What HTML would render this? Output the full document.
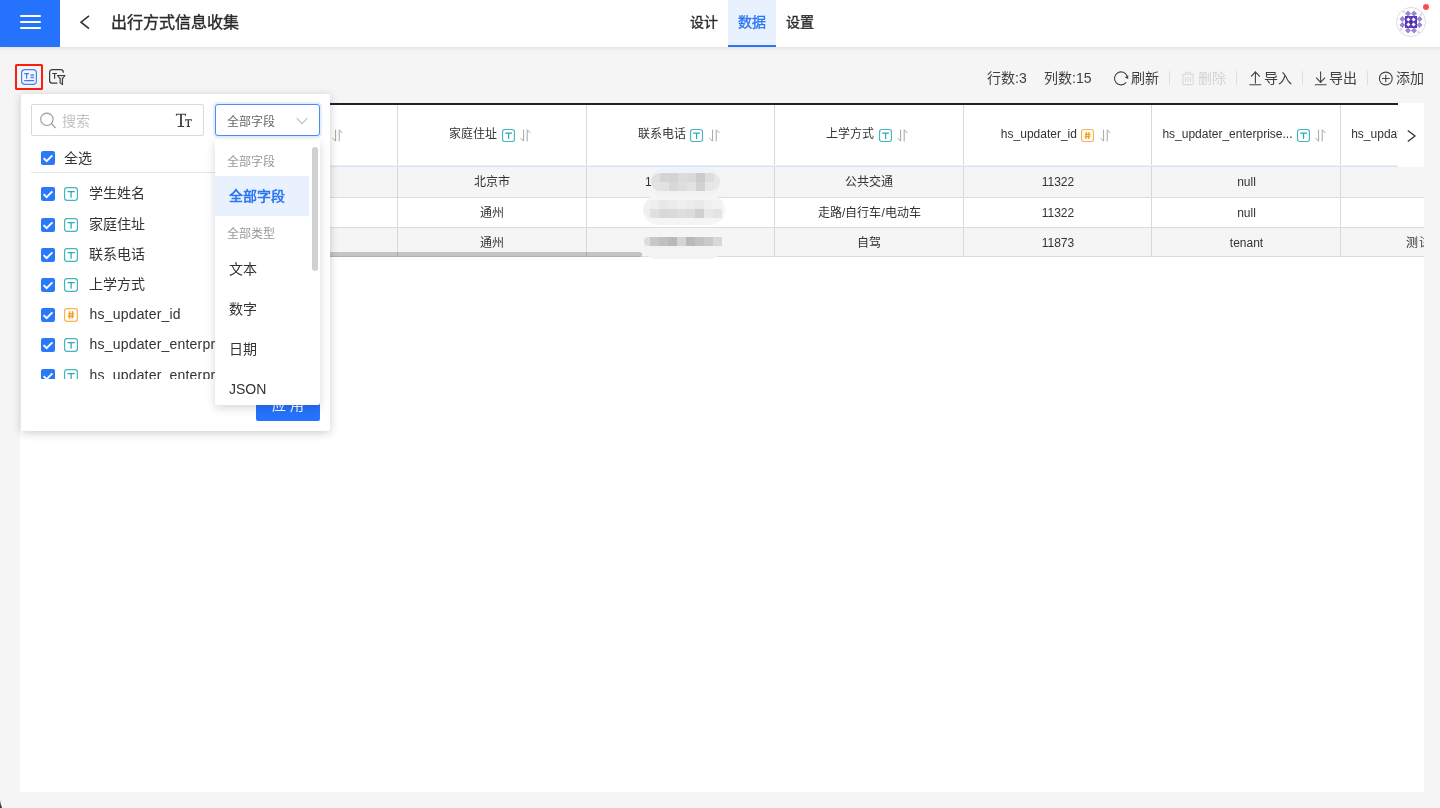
<!DOCTYPE html>
<html lang="zh-CN">
<head>
<meta charset="utf-8">
<title>出行方式信息收集</title>
<style>
*{box-sizing:border-box;margin:0;padding:0}
html,body{width:1440px;height:808px;overflow:hidden;background:#f5f5f5;font-family:"Liberation Sans",sans-serif;color:#333;font-size:14px}
#root{position:absolute;left:0;top:0;width:1440px;height:808px;overflow:hidden;will-change:transform}
.abs{position:absolute}
svg{display:block;overflow:visible}
/* header */
#hdr{position:absolute;left:0;top:0;width:1440px;height:47px;background:#fff;box-shadow:0 1px 4px rgba(0,0,0,.10)}
#menu{position:absolute;left:0;top:0;width:60px;height:47px;background:#2573fd}
#menu i{position:absolute;left:20px;width:21px;height:2px;background:#fff;border-radius:1px}
#title{position:absolute;left:111px;top:11px;height:24px;line-height:24px;font-size:16px;font-weight:normal;-webkit-text-stroke:.4px #2b2b2b;color:#2b2b2b;white-space:nowrap;letter-spacing:0}
.tab{position:absolute;top:0;width:48px;height:47px;line-height:45px;text-align:center;font-size:14px;font-weight:normal;-webkit-text-stroke:.35px;color:#2b2b2b}
.tab.on{background:#e9f1fe;color:#2a77f6;border-bottom:2px solid #2a77f6}
#avatar{position:absolute;left:1396px;top:7px;width:30px;height:30px;border-radius:50%;border:1px solid #dcdcdc;background:#fff;overflow:hidden}
#dot{position:absolute;left:1423px;top:4px;width:6px;height:6px;border-radius:50%;background:#ff4d4f}
/* toolbar */
#redbox{position:absolute;left:15px;top:64px;width:28px;height:26px;border:2px solid #ff1d12;border-radius:1.5px}
.tb{position:absolute;top:68px;height:20px;line-height:20px;font-size:14px;color:#404040;white-space:nowrap}
.tb.dis{color:#d4d4d4}
.vdiv{position:absolute;top:71px;width:1px;height:14px;background:#dedede}
/* panel + table */
#panel{position:absolute;left:20px;top:103px;width:1404px;height:689px;background:#fff}
#ttop{position:absolute;left:21px;top:103px;width:1377px;height:2px;background:#1f2329}
#thead{position:absolute;left:20px;top:105px;width:1378px;height:61px;background:#fff;overflow:hidden}
#hline{position:absolute;left:20px;top:165px;width:1378px;height:2px;background:linear-gradient(#e9f0fe 0 50%,#d2e1fc 50% 100%)}
.row{position:absolute;left:20px;width:1404px;height:30px;overflow:hidden;border-bottom:1px solid #dcdcdc}
.row.g{background:#f5f5f5}
.cb{position:absolute;top:0;width:1px;background:#d8d8d8}
.hc{position:absolute;top:0;height:61px;line-height:16px;display:flex;align-items:center;justify-content:center;font-size:12px;color:#333;white-space:nowrap;padding:0 11.5px 0 9.5px;overflow:hidden}
.hc .tx{position:relative;top:-2px}
.hc .ti{margin-left:4.5px;flex:none}
.hc .so{margin-left:5.5px;flex:none}
.c{position:absolute;top:0;height:30px;line-height:31px;padding-left:2.2px;text-align:center;font-size:12px;color:#333;white-space:nowrap}
.ti{display:inline-block;width:13px;height:13px}
#more{position:absolute;left:1398px;top:103px;width:26px;height:64px;background:#fff}
#mos i,#mos b{position:absolute;display:block}
.digit1{position:absolute;left:645px;top:167px;line-height:31px;font-size:12px;color:#333}
/* popup */
#pop{position:absolute;left:21px;top:94px;width:309px;height:337px;background:#fff;border-radius:2px;box-shadow:0 2px 10px rgba(0,0,0,.2)}
#search{position:absolute;left:10px;top:10px;width:173px;height:32px;border:1px solid #d9d9d9;border-radius:2px;background:#fff}
#search .ph{position:absolute;left:30px;top:5.5px;line-height:20px;font-size:14px;color:#c2c2c2}
#sel{position:absolute;left:194px;top:10px;width:105px;height:32px;border:1px solid #4a8df8;border-radius:3px;background:#fff;box-shadow:0 0 0 2px rgba(42,119,246,.12)}
#sel span{position:absolute;left:11px;top:6.5px;line-height:20px;font-size:12px;color:#666}
.ck{position:absolute;width:14px;height:14px;border-radius:2px;background:#2a79fb}
.li{position:absolute;left:20px;height:30px;width:260px;white-space:nowrap}
.li .ck{left:0;top:8px}
.li .t14{position:absolute;left:23px;top:8px;width:14px;height:14px}
.li span{position:absolute;left:48.4px;top:-1px;line-height:30px;font-size:14px;color:#333}
.li span.lt{letter-spacing:.2px;left:48.5px}
#list{position:absolute;left:0;top:85px;width:309px;height:200px;overflow:hidden}
#apply{position:absolute;left:235px;top:295px;width:64px;height:32px;background:#2573fd;border-radius:2px;color:#fff;font-size:14px;text-align:center;line-height:32px}
#dd{position:absolute;left:215px;top:140px;width:105px;height:265px;background:#fff;border-radius:2px;box-shadow:0 3px 10px rgba(0,0,0,.16);overflow:hidden}
#dd .gl{position:absolute;left:12px;height:32px;line-height:36px;font-size:12px;color:#999}
#dd .it{position:absolute;left:0;width:94px;height:40px;line-height:42px;padding-left:14px;font-size:14px;color:#333}
#dd .it.on{background:#e9f1fe;color:#2a77f6;font-weight:bold;line-height:40px}
#dd .sb{position:absolute;left:97px;top:7px;width:6px;height:124px;border-radius:3px;background:#d0d0d0}
</style>
</head>
<body>
<svg width="0" height="0" style="position:absolute">
<defs>
<symbol id="iT" viewBox="0 0 14 14"><rect x=".6" y=".6" width="12.8" height="12.8" rx="2.4" fill="#fff" stroke="#43b4c0" stroke-width="1.2"/><path d="M3.5 4.5H10.7M7.1 4.5V10.8" fill="none" stroke="#2ba6b3" stroke-width="1.25"/></symbol>
<symbol id="iN" viewBox="0 0 14 14"><rect x=".6" y=".6" width="12.8" height="12.8" rx="2.4" fill="#fff" stroke="#f5b550" stroke-width="1.2"/><path d="M5.9 3.2L5.3 10.8M8.7 3.2L8.1 10.8M4.1 5.9H10.3M3.8 8.3H10" fill="none" stroke="#f5a01f" stroke-width="1.4"/></symbol>
<symbol id="iS" viewBox="0 0 11 13"><path d="M3.6 .6V12.2L.6 9.2M7.2 12.4V.8L10.4 4" fill="none" stroke="#a6a6a6" stroke-width="1"/></symbol>
<symbol id="iC" viewBox="0 0 14 14"><path d="M2.6 7.1L5.6 10.1L11.4 4.3" fill="none" stroke="#fff" stroke-width="1.9"/></symbol>
</defs></svg>
<div id="root">
<div id="panel"></div>

<!-- HEADER -->
<div id="hdr">
  <div id="menu"><i style="top:15px"></i><i style="top:21px"></i><i style="top:27px"></i></div>
  <svg class="abs" style="left:78px;top:14px" width="14" height="17" viewBox="0 0 14 17"><path d="M11 1.8 L3 8.2 L11 14.6" fill="none" stroke="#333" stroke-width="1.6"/></svg>
  <div id="title">出行方式信息收集</div>
  <div class="tab" style="left:680px">设计</div>
  <div class="tab on" style="left:728px">数据</div>
  <div class="tab" style="left:776px">设置</div>
  <div id="avatar"><svg class="abs" style="left:0;top:0" width="28" height="28" viewBox="0 0 28 28">
<g fill="#9a85d6">
<path d="M11 2.4L14 5.4L11 8.4L8 5.4ZM17 2.4L20 5.4L17 8.4L14 5.4ZM11 19.6L14 22.6L11 25.6L8 22.6ZM17 19.6L20 22.6L17 25.6L14 22.6ZM5.4 8L8.4 11L5.4 14L2.4 11ZM5.4 14L8.4 17L5.4 20L2.4 17ZM22.6 8L25.6 11L22.6 14L19.6 11ZM22.6 14L25.6 17L22.6 20L19.6 17Z"/>
</g>
<g fill="#cfc5ee"><path d="M5 3L8.2 3.4L6.6 5.6ZM25 5L24.4 8.2L22.4 6.6ZM3 23L3.6 19.8L5.6 21.4ZM23 25L19.8 24.6L21.4 22.4Z"/></g>
<rect x="8" y="8" width="12" height="12" fill="#5a3ab6"/>
<g fill="#fff"><path d="M11.4 9.4L13.4 11.4L11.4 13.4L9.4 11.4ZM16.6 9.4L18.6 11.4L16.6 13.4L14.6 11.4ZM11.4 14.6L13.4 16.6L11.4 18.6L9.4 16.6ZM16.6 14.6L18.6 16.6L16.6 18.6L14.6 16.6Z"/></g>
<path d="M14 12.2L15.8 14L14 15.8L12.2 14Z" fill="#4a2ca6"/>
</svg></div>
  <div id="dot"></div>
</div>

<!-- TOOLBAR LEFT -->
<div id="redbox"></div>
<svg class="abs" style="left:21px;top:69px" width="16" height="16" viewBox="0 0 16 16"><rect x=".6" y=".6" width="14.8" height="14.8" rx="3.4" fill="none" stroke="#4285f7" stroke-width="1.2"/><path d="M3.2 4.6H8M5.6 4.6V9.8M3.2 11.6H13.1" fill="none" stroke="#3b7ff6" stroke-width="1.25"/><path d="M9.5 6.1H13.1M9.5 8.6H13.1" fill="none" stroke="#4b8af8" stroke-width="1.5"/></svg>
<svg class="abs" style="left:49px;top:69px" width="17" height="17" viewBox="0 0 17 17"><path d="M14.3 3.8V3.2A2.6 2.6 0 0 0 11.7 .6H3.2A2.6 2.6 0 0 0 .6 3.2V11.6A2.6 2.6 0 0 0 3.2 14.2H8.4" fill="none" stroke="#3a3a3a" stroke-width="1.2"/><path d="M3.2 4.5H8M5.6 4.5V9.7" fill="none" stroke="#3a3a3a" stroke-width="1.2"/><path d="M8.4 6.5H16L13.5 9.7V15.6L11.1 13.9V9.7Z" fill="#dcdcdc" stroke="#3a3a3a" stroke-width="1.1" stroke-linejoin="round"/></svg>


<!-- TOOLBAR RIGHT -->
<div class="tb" style="left:987px">行数:3</div>
<div class="tb" style="left:1044px">列数:15</div>
<div class="tb" style="left:1131px">刷新</div>
<div class="vdiv" style="left:1169px"></div>
<div class="tb dis" style="left:1198px">删除</div>
<div class="vdiv" style="left:1236px"></div>
<div class="tb" style="left:1264px">导入</div>
<div class="vdiv" style="left:1302px"></div>
<div class="tb" style="left:1329px">导出</div>
<div class="vdiv" style="left:1367px"></div>
<div class="tb" style="left:1396px">添加</div>

<svg class="abs" style="left:1113px;top:71px" width="16" height="15" viewBox="0 0 16 15"><path d="M13.1 11.4A6.5 6.5 0 1 1 14.2 5.4" fill="none" stroke="#444" stroke-width="1.1"/><path d="M15.3 4.2L15.2 7.9L11.7 6.5Z" fill="#444"/></svg>
<svg class="abs" style="left:1181px;top:71.4px" width="14" height="15" viewBox="0 0 14 15"><path d="M.6 3.2H13.4M4.4 3V1.9A.7 .7 0 0 1 5.1 1.2H8.9A.7 .7 0 0 1 9.6 1.9V3M1.9 3.4V12.5A1.1 1.1 0 0 0 3 13.6H11A1.1 1.1 0 0 0 12.1 12.5V3.4M4.6 6V11M7 6V11M9.4 6V11" fill="none" stroke="#dadada" stroke-width="1.1"/></svg>
<svg class="abs" style="left:1249px;top:71px" width="13" height="15" viewBox="0 0 13 15"><path d="M.4 13.8H12.2M6.4 12.4V.8M2 5.6L6.4 .8L10.8 5.6" fill="none" stroke="#444" stroke-width="1.1"/></svg>
<svg class="abs" style="left:1314px;top:71px" width="13" height="15" viewBox="0 0 13 15"><path d="M.8 13.8H12.6M6.6 .6V11.4M2.2 6.6L6.6 11.4L11 6.6" fill="none" stroke="#444" stroke-width="1.1"/></svg>
<svg class="abs" style="left:1378px;top:71px" width="15" height="15" viewBox="0 0 15 15"><circle cx="7.8" cy="7.5" r="6.4" fill="none" stroke="#444" stroke-width="1.1"/><path d="M4 7.5H11.7M7.8 3.8V11.3" fill="none" stroke="#444" stroke-width="1.1"/></svg>

<!-- TABLE -->
<div id="ttop"></div>
<div id="thead"><div class="hc" style="left:0px;width:188.5px;"><span class="tx">学生姓名</span><svg class="ti" width="13" height="13"><use href="#iT"/></svg><svg class="so" width="11" height="13"><use href="#iS"/></svg></div><div class="hc" style="left:188.5px;width:188.5px;"><span class="tx">学生姓名</span><svg class="ti" width="13" height="13"><use href="#iT"/></svg><svg class="so" width="11" height="13"><use href="#iS"/></svg></div><div class="hc" style="left:377px;width:188.6px;"><span class="tx">家庭住址</span><svg class="ti" width="13" height="13"><use href="#iT"/></svg><svg class="so" width="11" height="13"><use href="#iS"/></svg></div><div class="hc" style="left:565.6px;width:188.5px;"><span class="tx">联系电话</span><svg class="ti" width="13" height="13"><use href="#iT"/></svg><svg class="so" width="11" height="13"><use href="#iS"/></svg></div><div class="hc" style="left:754.1px;width:188.5px;"><span class="tx">上学方式</span><svg class="ti" width="13" height="13"><use href="#iT"/></svg><svg class="so" width="11" height="13"><use href="#iS"/></svg></div><div class="hc" style="left:942.6px;width:188.6px;"><span class="tx">hs_updater_id</span><svg class="ti" width="13" height="13"><use href="#iN"/></svg><svg class="so" width="11" height="13"><use href="#iS"/></svg></div><div class="hc" style="left:1131.2px;width:188.5px;"><span class="tx">hs_updater_enterprise...</span><svg class="ti" width="13" height="13"><use href="#iT"/></svg><svg class="so" width="11" height="13"><use href="#iS"/></svg></div><div class="hc" style="left:1319.7px;width:188.5px;justify-content:flex-start;padding-left:11.5px;"><span class="tx">hs_updater_enterprise_name</span><svg class="ti" width="13" height="13"><use href="#iT"/></svg><svg class="so" width="11" height="13"><use href="#iS"/></svg></div><div class="cb" style="left:188.5px;height:61px"></div><div class="cb" style="left:377px;height:61px"></div><div class="cb" style="left:565.6px;height:61px"></div><div class="cb" style="left:754.1px;height:61px"></div><div class="cb" style="left:942.6px;height:61px"></div><div class="cb" style="left:1131.2px;height:61px"></div><div class="cb" style="left:1319.7px;height:61px"></div></div>
<div id="hline"></div>
<div class="row g" style="top:167px;height:30.5px" id="r1"><div class="c" style="left:0px;width:188.5px">张三</div><div class="c" style="left:188.5px;width:188.5px">张三</div><div class="c" style="left:377px;width:188.6px">北京市</div><div class="c" style="left:565.6px;width:188.5px"></div><div class="c" style="left:754.1px;width:188.5px">公共交通</div><div class="c" style="left:942.6px;width:188.6px">11322</div><div class="c" style="left:1131.2px;width:188.5px">null</div><div class="c" style="left:1319.7px;width:188.5px"></div><div class="cb" style="left:188.5px;height:31px"></div><div class="cb" style="left:377px;height:31px"></div><div class="cb" style="left:565.6px;height:31px"></div><div class="cb" style="left:754.1px;height:31px"></div><div class="cb" style="left:942.6px;height:31px"></div><div class="cb" style="left:1131.2px;height:31px"></div><div class="cb" style="left:1319.7px;height:31px"></div></div>
<div class="row" style="top:197.5px;height:30.3px" id="r2"><div class="c" style="left:0px;width:188.5px">李四</div><div class="c" style="left:188.5px;width:188.5px">李四</div><div class="c" style="left:377px;width:188.6px">通州</div><div class="c" style="left:565.6px;width:188.5px"></div><div class="c" style="left:754.1px;width:188.5px">走路/自行车/电动车</div><div class="c" style="left:942.6px;width:188.6px">11322</div><div class="c" style="left:1131.2px;width:188.5px">null</div><div class="c" style="left:1319.7px;width:188.5px"></div><div class="cb" style="left:188.5px;height:31px"></div><div class="cb" style="left:377px;height:31px"></div><div class="cb" style="left:565.6px;height:31px"></div><div class="cb" style="left:754.1px;height:31px"></div><div class="cb" style="left:942.6px;height:31px"></div><div class="cb" style="left:1131.2px;height:31px"></div><div class="cb" style="left:1319.7px;height:31px"></div></div>
<div class="row g" style="top:227.8px;height:29.5px" id="r3"><div class="c" style="left:0px;width:188.5px">王五</div><div class="c" style="left:188.5px;width:188.5px">王五</div><div class="c" style="left:377px;width:188.6px">通州</div><div class="c" style="left:565.6px;width:188.5px"></div><div class="c" style="left:754.1px;width:188.5px">自驾</div><div class="c" style="left:942.6px;width:188.6px">11873</div><div class="c" style="left:1131.2px;width:188.5px">tenant</div><div class="c" style="left:1319.7px;width:188.5px"><span style="letter-spacing:.5px">测试企业1</span></div><div class="cb" style="left:188.5px;height:31px"></div><div class="cb" style="left:377px;height:31px"></div><div class="cb" style="left:565.6px;height:31px"></div><div class="cb" style="left:754.1px;height:31px"></div><div class="cb" style="left:942.6px;height:31px"></div><div class="cb" style="left:1131.2px;height:31px"></div><div class="cb" style="left:1319.7px;height:31px"></div></div>
<div class="digit1">1</div><div id="mos"><b style="left:651px;top:168px;width:69px;height:28px;border-radius:14px;background:#f0f2f8"></b><b style="left:643px;top:195px;width:82px;height:30px;border-radius:15px;background:#f5f5f5"></b><b style="left:644px;top:245px;width:78px;height:14px;border-radius:0 0 12px 12px;background:#f3f3f3"></b><div style="position:absolute;left:651px;top:173px;width:69px;height:18px;border-radius:9px;overflow:hidden"><i style="left:0px;top:0px;width:9px;height:9px;background:#e0e0e0"></i><i style="left:9px;top:0px;width:9px;height:9px;background:#d4d4d4"></i><i style="left:18px;top:0px;width:9px;height:9px;background:#d3d3d3"></i><i style="left:27px;top:0px;width:9px;height:9px;background:#dcdcdc"></i><i style="left:36px;top:0px;width:9px;height:9px;background:#d9d9d9"></i><i style="left:45px;top:0px;width:9px;height:9px;background:#cccccc"></i><i style="left:54px;top:0px;width:9px;height:9px;background:#dddddd"></i><i style="left:63px;top:0px;width:9px;height:9px;background:#e6e6e6"></i><i style="left:0px;top:9px;width:9px;height:9px;background:#e3e3e3"></i><i style="left:9px;top:9px;width:9px;height:9px;background:#e2e2e2"></i><i style="left:18px;top:9px;width:9px;height:9px;background:#d8d8d8"></i><i style="left:27px;top:9px;width:9px;height:9px;background:#dedede"></i><i style="left:36px;top:9px;width:9px;height:9px;background:#e2e2e2"></i><i style="left:45px;top:9px;width:9px;height:9px;background:#d2d2d2"></i><i style="left:54px;top:9px;width:9px;height:9px;background:#e6e6e6"></i><i style="left:63px;top:9px;width:9px;height:9px;background:#e8e8e8"></i></div><div style="position:absolute;left:643px;top:200px;width:79px;height:18px;border-radius:9px 0 0 9px;overflow:hidden"><i style="left:0px;top:0px;width:7px;height:9px;background:#f1f1f1"></i><i style="left:7px;top:0px;width:9px;height:9px;background:#eeeeee"></i><i style="left:16px;top:0px;width:9px;height:9px;background:#e8e8e8"></i><i style="left:25px;top:0px;width:9px;height:9px;background:#ebebeb"></i><i style="left:34px;top:0px;width:9px;height:9px;background:#efefef"></i><i style="left:43px;top:0px;width:9px;height:9px;background:#ececec"></i><i style="left:52px;top:0px;width:9px;height:9px;background:#e8e8e8"></i><i style="left:61px;top:0px;width:9px;height:9px;background:#f0f0f0"></i><i style="left:70px;top:0px;width:9px;height:9px;background:#f2f2f2"></i><i style="left:0px;top:9px;width:7px;height:9px;background:#eeeeee"></i><i style="left:7px;top:9px;width:9px;height:9px;background:#e0e0e0"></i><i style="left:16px;top:9px;width:9px;height:9px;background:#d8d8d8"></i><i style="left:25px;top:9px;width:9px;height:9px;background:#dadada"></i><i style="left:34px;top:9px;width:9px;height:9px;background:#dedede"></i><i style="left:43px;top:9px;width:9px;height:9px;background:#dcdcdc"></i><i style="left:52px;top:9px;width:9px;height:9px;background:#d0d0d0"></i><i style="left:61px;top:9px;width:9px;height:9px;background:#e8e8e8"></i><i style="left:70px;top:9px;width:9px;height:9px;background:#e4e4e4"></i></div><div style="position:absolute;left:644px;top:237px;width:78px;height:9px;border-radius:4px 0 0 4px;overflow:hidden"><i style="left:0px;top:0px;width:6px;height:9px;background:#dcdcdc"></i><i style="left:6px;top:0px;width:9px;height:9px;background:#c8c8c8"></i><i style="left:15px;top:0px;width:9px;height:9px;background:#c0c0c0"></i><i style="left:24px;top:0px;width:9px;height:9px;background:#b9b9b9"></i><i style="left:33px;top:0px;width:9px;height:9px;background:#d4d4d4"></i><i style="left:42px;top:0px;width:9px;height:9px;background:#b9b9b9"></i><i style="left:51px;top:0px;width:9px;height:9px;background:#c2c2c2"></i><i style="left:60px;top:0px;width:9px;height:9px;background:#cacaca"></i><i style="left:69px;top:0px;width:9px;height:9px;background:#d8d8d8"></i></div></div>
<div class="abs" style="left:20px;top:252px;width:622px;height:5.2px;border-radius:3px;background:rgba(0,0,0,.2)"></div>
<div class="abs" style="left:644px;top:252px;width:0;height:0"></div>
<div id="more"><svg class="abs" style="left:9px;top:27px" width="9" height="12" viewBox="0 0 9 12"><path d="M.8 .6L8 6L.8 11.4" fill="none" stroke="#333" stroke-width="1.3"/></svg></div>

<div class="abs" style="left:20px;top:103px;width:1.2px;height:155px;background:#fff"></div>
<!-- POPUP -->
<div id="pop">
  <div id="search"><svg class="abs" style="left:8px;top:8px" width="15" height="16" viewBox="0 0 15 16"><circle cx="6.9" cy="6.3" r="6.2" fill="none" stroke="#9a9a9a" stroke-width="1.1"/><path d="M11.3 10.7L15.6 15" fill="none" stroke="#9a9a9a" stroke-width="1.2"/></svg><span class="ph">搜索</span><svg class="abs" style="left:143px;top:8px" width="18" height="15" viewBox="0 0 18 15"><g fill="#3c3c3c"><path d="M.9 .8H11V3H10.2V1.8H6.9V13.1H9.1V14H2.7V13.1H5.1V1.8H1.7V3H.9Z"/><path d="M10 6.2H16.9V8.3H16.2V7.2H14V13.1H15V14H11.7V13.1H12.6V7.2H10.7V8.3H10Z"/></g></svg></div>
  <div id="sel"><span>全部字段</span><svg class="abs" style="left:80px;top:12.2px" width="12" height="8" viewBox="0 0 12 8"><path d="M.6 .8L6 6.6L11.4 .8" fill="none" stroke="#bdbdbd" stroke-width="1.1"/></svg></div>
<div class="ck" style="left:20px;top:57px"><svg width="14" height="14"><use href="#iC"/></svg></div>
  <div class="abs" style="left:43px;top:54px;line-height:20px;font-size:14px;color:#333">全选</div>
  <div class="abs" style="left:10px;top:78px;width:289px;height:1px;background:#e6e6e6"></div>
  <div id="list"><div class="li" style="top:0.3px"><div class="ck"><svg width="14" height="14"><use href="#iC"/></svg></div><svg class="t14" width="14" height="14"><use href="#iT"/></svg><span>学生姓名</span></div><div class="li" style="top:30.5px"><div class="ck"><svg width="14" height="14"><use href="#iC"/></svg></div><svg class="t14" width="14" height="14"><use href="#iT"/></svg><span>家庭住址</span></div><div class="li" style="top:60.7px"><div class="ck"><svg width="14" height="14"><use href="#iC"/></svg></div><svg class="t14" width="14" height="14"><use href="#iT"/></svg><span>联系电话</span></div><div class="li" style="top:90.9px"><div class="ck"><svg width="14" height="14"><use href="#iC"/></svg></div><svg class="t14" width="14" height="14"><use href="#iT"/></svg><span>上学方式</span></div><div class="li" style="top:121.1px"><div class="ck"><svg width="14" height="14"><use href="#iC"/></svg></div><svg class="t14" width="14" height="14"><use href="#iN"/></svg><span class="lt">hs_updater_id</span></div><div class="li" style="top:151.3px"><div class="ck"><svg width="14" height="14"><use href="#iC"/></svg></div><svg class="t14" width="14" height="14"><use href="#iT"/></svg><span class="lt">hs_updater_enterprise_id</span></div><div class="li" style="top:181.5px"><div class="ck"><svg width="14" height="14"><use href="#iC"/></svg></div><svg class="t14" width="14" height="14"><use href="#iT"/></svg><span class="lt">hs_updater_enterprise_name</span></div></div>
  <div id="apply">应 用</div>
</div>
<div id="dd"><div class="gl" style="top:4px">全部字段</div>
<div class="it on" style="top:36px">全部字段</div>
<div class="gl" style="top:76px">全部类型</div>
<div class="it" style="top:108px">文本</div>
<div class="it" style="top:148px">数字</div>
<div class="it" style="top:188px">日期</div>
<div class="it" style="top:228px">JSON</div>
<div class="sb"></div></div>
<svg class="abs" style="left:0;top:799px" width="4" height="9" viewBox="0 0 4 9"><path d="M0 1.2Q.5 5.5 2.1 9H0Z" fill="#3a3a3a"/></svg>
</div>
</body>
</html>
